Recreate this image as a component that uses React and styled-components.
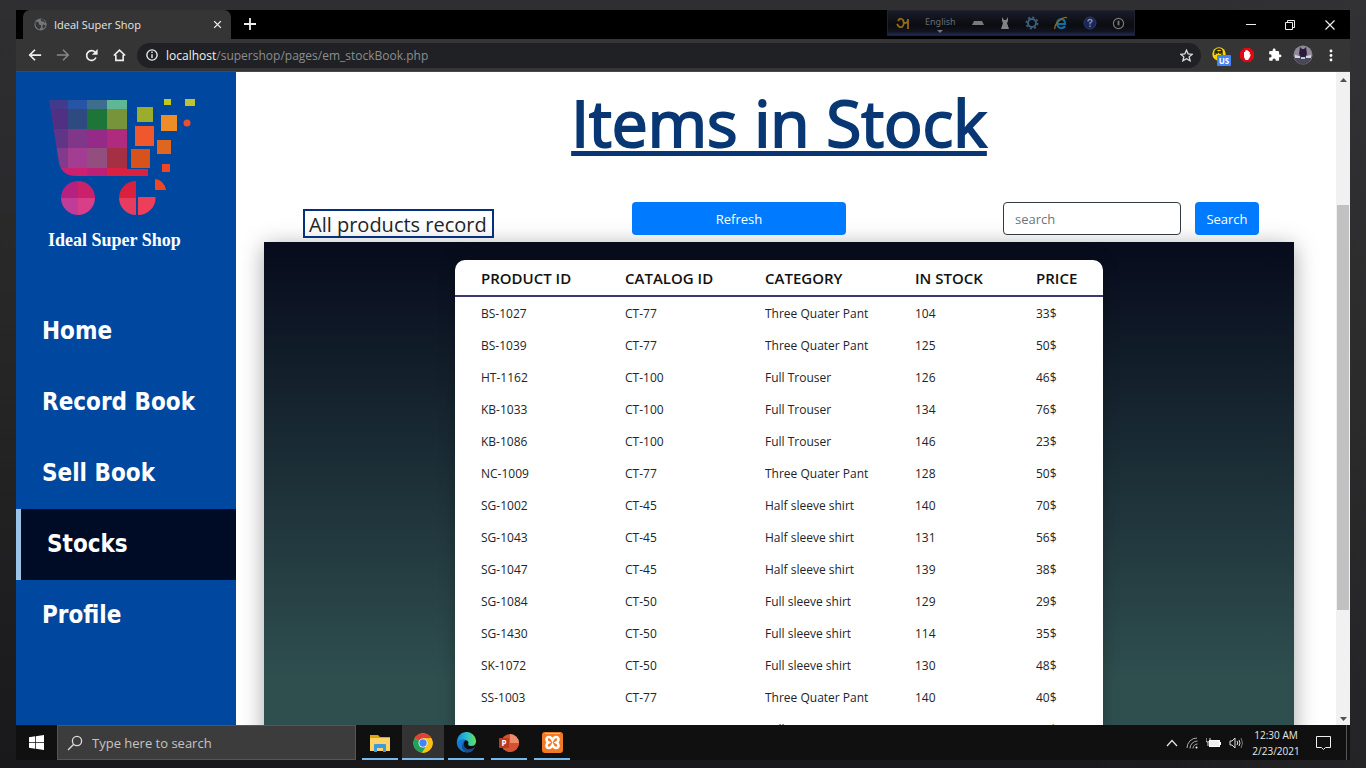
import React from "react";
import styled, { createGlobalStyle, css } from "styled-components";

const ui = `"Open Sans", "Noto Sans", sans-serif`;

const GlobalStyle = createGlobalStyle`
  *, *::before, *::after { box-sizing: border-box; }
  body { margin: 0; font-family: ${ui}; }
  button, input { font-family: inherit; }
`;

const Desktop = styled.div`
  height: 100vh;
  padding: 10px 16px 8px;
  background: linear-gradient(100deg, transparent 80%, rgba(70, 70, 72, 0.25)), linear-gradient(#2f2f31, #252526 50%, #19191b);
  display: flex;
  flex-direction: column;
`;

const TabStrip = styled.header`
  height: 29px;
  flex: none;
  background: #000;
  display: flex;
  align-items: stretch;
  padding-left: 7px;
`;

const Tab = styled.div`
  width: 208px;
  background: #353535;
  border-radius: 7px 7px 0 0;
  display: flex;
  align-items: center;
  gap: 7px;
  padding: 0 8px 0 11px;
  color: #e6e6e6;
  font-size: 11px;
  line-height: 14px;
`;

const TabTitle = styled.span`
  flex: 1;
  white-space: nowrap;
`;

const IconButton = styled.button`
  border: 0;
  padding: 0;
  background: none;
  color: ${(p) => p.$color || "#eee"};
  width: ${(p) => p.$w || 28}px;
  height: ${(p) => p.$h || 28}px;
  flex: none;
  display: flex;
  align-items: center;
  justify-content: center;
`;

const LanguageBar = styled.div`
  width: 248px;
  height: 26px;
  margin-left: auto;
  border: 1px solid #20222e;
  background: linear-gradient(#181c28, #0b0c11 60%, #11141f 85%, #202a52);
  display: flex;
  align-items: center;
  justify-content: space-between;
  padding: 0 9px 0 8px;
`;

const Language = styled.span`
  display: flex;
  flex-direction: column;
  align-items: center;
  color: #6c6c6e;
  font-family: "Noto Sans", sans-serif;
  font-size: 9px;
  line-height: 12px;
  gap: 2px;
  padding-top: 3px;
`;

const Controls = styled.div`
  display: flex;
  align-items: center;
  margin-left: 96px;
`;

const AddressRow = styled.div`
  height: 33px;
  flex: none;
  background: #353535;
  border-bottom: 1px solid #484848;
  display: flex;
  align-items: center;
  padding: 0 5px;
`;

const Omnibox = styled.div`
  flex: 1;
  height: 25px;
  border-radius: 13px;
  background: #202124;
  margin: 0 8px 0 4px;
  padding: 0 1px 0 9px;
  display: flex;
  align-items: center;
  gap: 8px;
  color: #8b8d90;
  font-size: 12px;
`;

const Url = styled.span`
  flex: 1;
  b { color: #f1f1f1; font-weight: 400; }
`;

const Viewport = styled.div`
  flex: 1;
  min-height: 0;
  display: flex;
  background: #fff;
`;

const Sidebar = styled.aside`
  width: 220px;
  flex: none;
  background: #00489f;
  overflow: hidden;
`;

const Brand = styled.div`
  height: 224px;
  padding: 24px 0 0 32px;
`;

const BrandName = styled.div`
  margin-top: 12px;
  color: #fff;
  font: 700 18px/24px "Liberation Serif", serif;
`;

const NavLink = styled.a`
  display: flex;
  align-items: center;
  height: 71px;
  padding: 0 0 2px 26px;
  color: #fff;
  font: 700 24px/32px "DejaVu Sans Condensed", "Noto Sans", sans-serif;
  text-decoration: none;
  ${(p) => p.$active && css`
    background: #000c26;
    border-left: 5px solid #9cc4e8;
  `}
`;

const Page = styled.main`
  flex: 1;
  min-width: 0;
  overflow: hidden;
  padding: 0 42px 0 28px;
`;

const Title = styled.h1`
  margin: 0;
  padding-top: 11px;
  text-align: center;
  color: #083774;
  font-size: 64px;
  font-weight: 400;
  line-height: 80px;
  -webkit-text-stroke: 2px #083774;
  text-decoration: underline;
  text-decoration-thickness: 5px;
  text-underline-offset: 4px;
  text-decoration-skip-ink: none;
`;

const Tools = styled.div`
  display: grid;
  grid-template-columns: 329fr 371fr minmax(0, 256fr);
  align-items: start;
  padding: 0 35px 0 39px;
  margin-top: 39px;
  height: 40px;
`;

const RecordLabel = styled.h2`
  justify-self: start;
  margin: 7px 0 0;
  height: 29px;
  padding: 0 5px 0 4px;
  border: 2px solid #06307c;
  color: #212529;
  font-size: 20px;
  font-weight: 500;
  line-height: 28px;
  white-space: nowrap;
`;

const PrimaryButton = styled.button`
  width: ${(p) => p.$w}px;
  height: 33px;
  flex: none;
  border: 0;
  border-radius: 4px;
  padding: 0;
  background: #007bff;
  color: #fff;
  font-size: 13px;
`;

const SearchForm = styled.form`
  display: flex;
  gap: 14px;
`;

const SearchInput = styled.input`
  flex: 1;
  min-width: 0;
  height: 33px;
  border: 1px solid #343a40;
  border-radius: 4px;
  padding: 0 11px;
  font-size: 13px;
  color: #343a40;
  &::placeholder { color: #6c757d; opacity: 1; }
`;

const Panel = styled.section`
  padding: 18px 0;
  background: linear-gradient(#070b1c, #2f4f4f 440px);
  box-shadow: 0 4px 22px rgba(0, 0, 0, 0.35);
`;

const StockTable = styled.table`
  width: 648px;
  margin: 0 auto;
  table-layout: fixed;
  border-spacing: 0;
  background: #fff;
  border-radius: 10px 10px 0 0;
  box-shadow: 0 0 16px rgba(0, 0, 0, 0.25);
  text-align: left;
  th, td { padding: 0 0 0 26px; white-space: nowrap; }
  th {
    height: 37px;
    border-bottom: 2px solid #3c3a70;
    color: #111;
    font-size: 15px;
    font-weight: 600;
  }
  td { height: 32px; color: #212529; font-size: 12px; }
`;

const ScrollTrack = styled.div`
  width: 14px;
  flex: none;
  background: #f1f1f1;
  display: flex;
  flex-direction: column;
  align-items: center;
`;

const ScrollThumb = styled.div`
  width: 12px;
  height: 62%;
  margin: 119px 0 auto;
  background: #c1c1c1;
`;

const Arrow = styled.svg`
  flex: none;
  margin: 6px 0 4px;
`;

const Taskbar = styled.footer`
  height: 35px;
  flex: none;
  background: #101010;
  display: flex;
  align-items: stretch;
`;

const TaskSearch = styled.label`
  width: 299px;
  margin-right: 6px;
  border: 1px solid #555;
  background: #3c3c3c;
  display: flex;
  align-items: center;
  gap: 9px;
  padding-left: 9px;
  input {
    border: 0;
    padding: 0;
    flex: 1;
    min-width: 0;
    background: none;
    font-size: 13px;
  }
  input::placeholder { color: #c4c4c4; opacity: 1; }
`;

const TaskButton = styled.button`
  width: ${(p) => (p.$active ? 42 : 36)}px;
  margin-right: ${(p) => (p.$tight ? 4 : 7)}px;
  border: 0;
  border-bottom: 2px solid #76b9ed;
  padding: 2px 0 0;
  background: ${(p) => (p.$active ? "#333" : "none")};
  display: flex;
  align-items: center;
  justify-content: center;
`;

const Tray = styled.div`
  margin-left: auto;
  display: flex;
  align-items: center;
  gap: 8px;
  color: #e8e8e8;
`;

const Clock = styled.div`
  width: 48px;
  text-align: center;
  font-size: 10px;
  line-height: 16px;
  white-space: nowrap;
`;

const ShowDesktop = styled.div`
  align-self: stretch;
  width: 4px;
  border-left: 1px solid #555;
`;

const Globe = () => (
  <svg width="13" height="13" viewBox="0 0 16 16">
    <circle cx="8" cy="8" r="7.5" fill="#74777a" />
    <path d="M2 5c3-1 4 0 4 2s3 1 3 3-2 2-2 4c-3-1-6-4-5-9zM9 1c-1 2-1 3 1 3s2 2 4 2c0-2-2-4-5-5zM11 8l3 1c0 2-1 3-3 4-1-2 0-3 0-5z" fill="#35363a" />
  </svg>
);

const Line = ({ d, size = 16, w = 2, box = 16 }) => (
  <svg width={size} height={size} viewBox={`0 0 ${box} ${box}`} fill="none" stroke="currentColor" strokeWidth={w}>
    <path d={d} />
  </svg>
);

const CartSvg = styled.svg`
  display: block;
`;

const Cart = () => (
  <CartSvg width="150" height="120" viewBox="0 0 150 120">
    <defs>
      <clipPath id="basket"><path d="M1 4H79V73H100V80H28Q14 80 11 67Z" /></clipPath>
    </defs>
    <g clipPath="url(#basket)">
      {[
        [0, 4, 20, 9, "#423b8c"], [20, 4, 19, 9, "#2854a5"], [39, 4, 20, 9, "#3e6e8d"], [59, 4, 20, 9, "#60b796"],
        [0, 13, 20, 20, "#503083"], [20, 13, 19, 20, "#2e4a80"], [39, 13, 20, 20, "#1d7637"], [59, 13, 20, 20, "#78943a"],
        [0, 33, 20, 19, "#603588"], [20, 33, 19, 19, "#813789"], [39, 33, 20, 19, "#952b86"], [59, 33, 20, 19, "#af2b7d"],
        [0, 52, 20, 20, "#823a8c"], [20, 52, 19, 20, "#a33d92"], [39, 52, 20, 20, "#934e80"], [59, 52, 20, 20, "#a63043"],
        [0, 72, 39, 8, "#cc216e"], [39, 72, 20, 8, "#bc2177"], [59, 72, 41, 8, "#db2142"],
      ].map(([x, y, w, h, c]) => <rect key={`${x}-${y}`} x={x} y={y} width={w} height={h} fill={c} />)}
    </g>
    {[
      [89, 11, 16, 15, "#9cad2b"], [87, 30, 19, 20, "#f0572d"], [83, 53, 19, 19, "#d8531b"], [113, 19, 16, 16, "#ee8d27"],
      [109, 44, 14, 14, "#de661f"], [114, 68, 8, 8, "#f04722"], [116, 3, 7, 6, "#c1c91f"], [137, 3, 10, 7, "#bdc332"],
    ].map(([x, y, w, h, c]) => <rect key={`${x}-${y}`} x={x} y={y} width={w} height={h} fill={c} />)}
    <circle cx="139" cy="27" r="3.5" fill="#f04e2b" />
    <path d="M30 102V85A17 17 0 0 0 13 102Z" fill="#b4217f" />
    <path d="M30 102V85A17 17 0 0 1 47 102Z" fill="#cb216b" />
    <path d="M30 102H13A17 17 0 0 0 30 119Z" fill="#c13b99" />
    <path d="M30 102H47A17 17 0 0 1 30 119Z" fill="#d83f88" />
    <path d="M88 102V85A17 17 0 0 0 71 102Z" fill="#d9213f" />
    <path d="M88 102H71A17 17 0 0 0 88 119Z" fill="#e83b60" />
    <path d="M90 101H107.500A17 17 0 0 1 90 119Z" fill="#ee3e59" />
    <path d="M107 83Q116 84 118 94H107Z" fill="#f04722" />
  </CartSvg>
);

const rows = [
  ["BS-1027", "CT-77", "Three Quater Pant", "104", "33$"],
  ["BS-1039", "CT-77", "Three Quater Pant", "125", "50$"],
  ["HT-1162", "CT-100", "Full Trouser", "126", "46$"],
  ["KB-1033", "CT-100", "Full Trouser", "134", "76$"],
  ["KB-1086", "CT-100", "Full Trouser", "146", "23$"],
  ["NC-1009", "CT-77", "Three Quater Pant", "128", "50$"],
  ["SG-1002", "CT-45", "Half sleeve shirt", "140", "70$"],
  ["SG-1043", "CT-45", "Half sleeve shirt", "131", "56$"],
  ["SG-1047", "CT-45", "Half sleeve shirt", "139", "38$"],
  ["SG-1084", "CT-50", "Full sleeve shirt", "129", "29$"],
  ["SG-1430", "CT-50", "Full sleeve shirt", "114", "35$"],
  ["SK-1072", "CT-50", "Full sleeve shirt", "130", "48$"],
  ["SS-1003", "CT-77", "Three Quater Pant", "140", "40$"],
  ["SS-1063", "CT-80", "Full Quater Pant", "115", "43$"],
];

const columns = [
  ["PRODUCT ID", 144], ["CATALOG ID", 140], ["CATEGORY", 150], ["IN STOCK", 121], ["PRICE", 93],
];

const navItems = ["Home", "Record Book", "Sell Book", "Stocks", "Profile"];

export default function App() {
  return (
    <Desktop>
      <GlobalStyle />
      <TabStrip>
        <Tab>
          <Globe />
          <TabTitle>Ideal Super Shop</TabTitle>
          <IconButton $w={12} aria-label="Close tab"><Line size={9} d="M2 2L14 14M14 2L2 14" w={2.400} /></IconButton>
        </Tab>
        <IconButton $w={38} aria-label="New tab"><Line size={12} d="M8 0V16M0 8H16" w={2.400} /></IconButton>
        <LanguageBar>
          <svg width="14" height="14" viewBox="0 0 14 14" fill="none" stroke="#94690f" strokeWidth="1.800">
            <path d="M2 5Q4 1 7 4Q9 8 6 11Q3 12 1 8M7 7H9Q12 7 12 3V13" />
          </svg>
          <Language>English<svg width="6" height="3"><path d="M0 0H6L3 3Z" fill="#777" /></svg></Language>
          <svg width="14" height="6"><path d="M3 1H11L13 5H1Z" fill="#77797b" /></svg>
          <svg width="10" height="14" viewBox="0 0 10 14"><path d="M2 1L4 4H6L8 1V5L7 7L9 13H1L3 7L2 5Z" fill="#808284" /></svg>
          <svg width="14" height="14" viewBox="0 0 14 14" fill="none" stroke="#3c5e7c">
            <circle cx="7" cy="7" r="4" strokeWidth="2" /><circle cx="7" cy="7" r="5.700" strokeWidth="1.600" strokeDasharray="2.200 2.200" />
          </svg>
          <svg width="14" height="14" viewBox="0 0 14 14" fill="none">
            <path d="M3 8H11Q11 3 7 3Q3 4 3 8Q4 12 7 12Q10 12 11 10" stroke="#146d9c" strokeWidth="2.200" />
            <path d="M1 13Q0 9 6 4Q11 0 13 2" stroke="#8b6d16" strokeWidth="1.300" />
          </svg>
          <svg width="14" height="14" viewBox="0 0 14 14" fill="none">
            <circle cx="7" cy="7" r="6" fill="#16275f" stroke="#30395c" />
            <path d="M5 5.500Q5 3.500 7 3.500Q9 3.500 9 5Q9 6 7 7V8.500M7 9.500V11" stroke="#8b8e9a" strokeWidth="1.400" />
          </svg>
          <svg width="13" height="13" viewBox="0 0 14 14" fill="none" stroke="#777" strokeWidth="1.300"><circle cx="7" cy="7" r="5.500" /><path d="M7 4V9" strokeWidth="2" /></svg>
        </LanguageBar>
        <Controls>
          <IconButton $w={40} $h={24} aria-label="Minimize"><Line size={10} box={10} w={1} d="M0 4.500H10" /></IconButton>
          <IconButton $w={38} $h={24} aria-label="Restore"><Line size={10} box={10} w={1} d="M.5 2.500H7.500V9.500H.5ZM2.500 2.500V.5H9.500V7.500H7.500" /></IconButton>
          <IconButton $w={41} $h={24} aria-label="Close"><Line size={10} box={10} w={1.200} d="M.5.5L9.500 9.500M9.500.5L.5 9.500" /></IconButton>
        </Controls>
      </TabStrip>
      <AddressRow>
        <IconButton aria-label="Back"><Line size={14} d="M15 8H2M8 2L2 8L8 14" /></IconButton>
        <IconButton $color="#87888a" aria-label="Forward"><Line size={14} d="M1 8H14M8 2L14 8L8 14" w={1.700} /></IconButton>
        <IconButton aria-label="Reload">
          <svg width="13" height="13" viewBox="0 0 16 16" fill="none" stroke="currentColor" strokeWidth="2"><path d="M13.500 10.500A6 6 0 1 1 12.500 4" /><path d="M15.500 0V7H8.500Z" fill="currentColor" stroke="none" /></svg>
        </IconButton>
        <IconButton aria-label="Home page"><Line size={13} d="M1 8L8 1.500L15 8M3.500 7V14H12.500V7" w={2} /></IconButton>
        <Omnibox>
          <svg width="12" height="12" viewBox="0 0 14 14" fill="none" stroke="#eee" strokeWidth="1.600"><circle cx="7" cy="7" r="6" /><path d="M7 6V10.500M7 3V4.600" /></svg>
          <Url><b>localhost</b>/supershop/pages/em_stockBook.php</Url>
          <IconButton $w={28} $h={25} $color="#ddd" aria-label="Bookmark"><Line size={13} w={1.600} d="M8 1.500L10 6L15 6.500L11.300 9.700L12.400 14.500L8 12L3.600 14.500L4.700 9.700L1 6.500L6 6Z" /></IconButton>
        </Omnibox>
        <IconButton $w={24} aria-label="VPN extension">
          <svg width="22" height="22" viewBox="0 0 22 22">
            <circle cx="9" cy="10" r="6.700" fill="#f8d700" /><path d="M5 11V8Q6 5 9 5Q12 5 12 8V11M7 7V10M10 7V10M5 8H12" fill="none" stroke="#222" strokeWidth="1.400" />
            <rect x="7" y="11" width="14" height="11" rx="1" fill="#4285f4" />
            <text x="14" y="20" textAnchor="middle" fontFamily="Open Sans" fontWeight="700" fontSize="8" fill="#fff">US</text>
          </svg>
        </IconButton>
        <IconButton aria-label="Blocker extension">
          <svg width="14" height="14" viewBox="0 0 14 14"><path d="M4 0H10L14 4V10L10 14H4L0 10V4Z" fill="#e30613" /><path d="M4 7V4H5.200V2.500H6.400V2H7.600V3H8.800V4H9.800V7L11 6L10 9L8 12H5.500L4 9Z" fill="#fff" /></svg>
        </IconButton>
        <IconButton $color="#fff" aria-label="Extensions">
          <svg width="14" height="14" viewBox="0 0 24 24" fill="currentColor"><path d="M20.500 11H19V7a2 2 0 0 0-2-2h-4V3.500a2.500 2.500 0 0 0-5 0V5H4a2 2 0 0 0-2 2v3.800h1.500a2.700 2.700 0 0 1 0 5.400H2V20a2 2 0 0 0 2 2h3.800v-1.500a2.700 2.700 0 0 1 5.400 0V22H17a2 2 0 0 0 2-2v-4h1.500a2.500 2.500 0 0 0 0-5z" /></svg>
        </IconButton>
        <IconButton aria-label="Account">
          <svg width="20" height="20" viewBox="0 0 20 20">
            <circle cx="10" cy="10" r="9.500" fill="#8f8998" /><path d="M1 12Q10 8 19 12Q17 19 10 19.500Q3 19 1 12Z" fill="#4b4658" />
            <path d="M6 9L7 2L9 4H11L13 2L14 9L12 12H8Z" fill="#2a1a3c" /><path d="M2 10L7 11V13H2ZM13 11L18 10V13H13Z" fill="#d5d2da" /><path d="M8 12H12V14H8Z" fill="#a7d4d8" />
          </svg>
        </IconButton>
        <IconButton aria-label="Menu"><svg width="4" height="14" fill="#fff"><circle cx="2" cy="3" r="1.400" /><circle cx="2" cy="7.500" r="1.400" /><circle cx="2" cy="12" r="1.400" /></svg></IconButton>
      </AddressRow>

      <Viewport>
        <Sidebar>
          <Brand><Cart /><BrandName>Ideal Super Shop</BrandName></Brand>
          <nav>
            {navItems.map((n) => <NavLink key={n} href="#" $active={n === "Stocks"}>{n}</NavLink>)}
          </nav>
        </Sidebar>
        <Page>
          <Title>Items in Stock</Title>
          <Tools>
            <RecordLabel>All products record</RecordLabel>
            <PrimaryButton $w={214}>Refresh</PrimaryButton>
            <SearchForm>
              <SearchInput placeholder="search" aria-label="Search products" />
              <PrimaryButton $w={64} type="button">Search</PrimaryButton>
            </SearchForm>
          </Tools>
          <Panel>
            <StockTable>
              <colgroup>{columns.map(([c, w]) => <col key={c} width={w} />)}</colgroup>
              <thead><tr>{columns.map(([c]) => <th key={c} scope="col">{c}</th>)}</tr></thead>
              <tbody>
                {rows.map((r) => <tr key={r[0]}>{r.map((v, i) => <td key={columns[i][0]}>{v}</td>)}</tr>)}
              </tbody>
            </StockTable>
          </Panel>
        </Page>
        <ScrollTrack>
          <Arrow width="7" height="4"><path d="M0 4L3.500 0L7 4Z" fill="#505050" /></Arrow>
          <ScrollThumb />
          <Arrow width="7" height="4"><path d="M0 0H7L3.500 4Z" fill="#505050" /></Arrow>
        </ScrollTrack>
      </Viewport>

      <Taskbar>
        <IconButton $w={41} $h={35} aria-label="Start">
          <svg width="15" height="15" viewBox="0 0 16 16" fill="#fff"><path d="M0 2.300L6.500 1.400V7.600H0ZM7.300 1.300L16 0V7.600H7.300ZM0 8.400H6.500V14.600L0 13.700ZM7.300 8.400H16V16L7.300 14.700Z" /></svg>
        </IconButton>
        <TaskSearch>
          <svg width="16" height="16" viewBox="0 0 16 16" fill="none" stroke="#ddd" strokeWidth="1.300"><circle cx="10" cy="6" r="4.600" /><path d="M6.700 9.300L1 15" /></svg>
          <input placeholder="Type here to search" aria-label="Type here to search" />
        </TaskSearch>
        <TaskButton $tight aria-label="File Explorer">
          <svg width="20" height="18" viewBox="0 0 20 18"><path d="M0 1H8L10 3H20V17H0Z" fill="#e0a30c" /><path d="M0 4H20V17H0Z" fill="#fcd364" /><path d="M4 18V11Q4 10 5 10H15Q16 10 16 11V18H13V14H7V18Z" fill="#3a9be0" /></svg>
        </TaskButton>
        <TaskButton $active $tight aria-label="Chrome">
          <svg width="20" height="20" viewBox="0 0 20 20">
            <circle cx="10" cy="10" r="9.700" fill="#fbc116" />
            <path d="M10 10L1.600 5.150A9.700 9.700 0 0 1 18.400 5.150H10Z" fill="#db4437" />
            <path d="M10 10L1.600 5.150A9.700 9.700 0 0 0 9 19.650L14 12Z" fill="#1fa35a" />
            <path d="M10 5.200H18.400A9.700 9.700 0 0 1 9 19.650L14 12Z" fill="#fbc116" />
            <circle cx="10" cy="10" r="4.500" fill="#fff" /><circle cx="10" cy="10" r="3.700" fill="#4285f4" />
          </svg>
        </TaskButton>
        <TaskButton aria-label="Edge">
          <svg width="21" height="21" viewBox="0 0 24 24">
            <defs><linearGradient id="edgeTop"><stop stopColor="#1489dc" /><stop offset=".5" stopColor="#2abfd0" /><stop offset="1" stopColor="#65e14f" /></linearGradient></defs>
            <path d="M1 12A11 11 0 0 1 23 10Q23 16 17 16Q13 16 14 13Q15 10 11 9Q4 8 1 14Z" fill="url(#edgeTop)" />
            <path d="M1 13Q4 7 11 9Q7 12 9 17Q11 22 17 22A11 11 0 0 1 1 13Z" fill="#1479d1" />
            <path d="M10 10Q7 16 12 19Q16 21 22 17Q18 25 11 23Q3 18 10 10Z" fill="#134f94" />
          </svg>
        </TaskButton>
        <TaskButton aria-label="PowerPoint">
          <svg width="20" height="20" viewBox="0 0 20 20">
            <circle cx="11" cy="10" r="9" fill="#d35230" /><path d="M11 1A9 9 0 0 1 20 10H11Z" fill="#f08a6c" /><path d="M2 10H20A9 9 0 0 1 2 10Z" fill="#d35230" />
            <rect x="0" y="5" width="10" height="10" rx="1" fill="#b83b1d" />
            <text x="5" y="13" textAnchor="middle" fontFamily="Open Sans" fontSize="8" fontWeight="700" fill="#fff">P</text>
          </svg>
        </TaskButton>
        <TaskButton aria-label="XAMPP">
          <svg width="21" height="21" viewBox="0 0 21 21"><rect width="21" height="21" rx="3" fill="#f27a24" /><path d="M3 1.500H18" stroke="#fbb98a" strokeWidth="1" />
            <path d="M10.500 8Q9 5 7 5Q4.500 5 4.500 7.500Q4.500 9.500 6.500 10.500Q4.500 11.500 4.500 13.500Q4.500 16 7 16Q9 16 10.500 13Q12 16 14 16Q16.500 16 16.500 13.500Q16.500 11.500 14.500 10.500Q16.500 9.500 16.500 7.500Q16.500 5 14 5Q12 5 10.500 8Z" fill="none" stroke="#fff" strokeWidth="2.600" /></svg>
        </TaskButton>
        <Tray>
          <Line size={12} box={12} w={1.200} d="M1 9L6 3.500L11 9" />
          <svg width="12" height="12" viewBox="0 0 12 12" fill="none" stroke="#aaa"><path d="M1 11A10 10 0 0 1 11 1M4 11.500A7.500 7.500 0 0 1 11.500 4M7 11.500A4.500 4.500 0 0 1 11.500 7" /><circle cx="10.500" cy="10.500" r="1" fill="#fff" stroke="none" /></svg>
          <svg width="15" height="10" viewBox="0 0 15 10"><path d="M0 0V3Q0 4 2 4V8M4 0V3L2 4" fill="none" stroke="#ddd" /><rect x="3.500" y="2.500" width="10" height="6" fill="#eee" stroke="#fff" /><path d="M14 4H15V7H14Z" fill="#fff" /></svg>
          <svg width="15" height="12" viewBox="0 0 15 12" fill="none" stroke="#ddd"><path d="M1 4H3L6 1V11L3 8H1ZM8 4Q9.500 6 8 8M10 3Q12 6 10 9" /><path d="M12 1Q15 6 12 11" stroke="#777" /></svg>
          <Clock>12:30 AM<br />2/23/2021</Clock>
          <IconButton $w={30} aria-label="Notifications"><Line size={15} box={15} w={1} d="M.5 1.500H14.500V12.500H9.500L7.500 14.500L5.500 12.500H.5Z" /></IconButton>
          <ShowDesktop />
        </Tray>
      </Taskbar>
    </Desktop>
  );
}
